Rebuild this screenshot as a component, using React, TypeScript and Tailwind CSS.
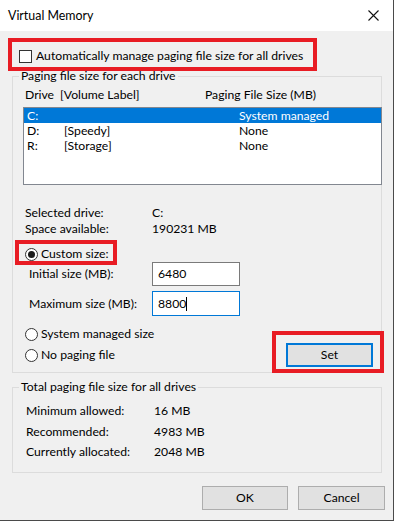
import React from 'react';

const font = { fontFamily: 'Lato, "Noto Sans", Arial, sans-serif' };

const Radio: React.FC<{ checked?: boolean; label: string }> = ({ checked, label }) => (
    <div className="flex items-center h-[16px] gap-[3px]">
        <span className="w-[13px] h-[13px] rounded-full border border-[#333] bg-white flex items-center justify-center">
            {checked && <span className="w-[7px] h-[7px] rounded-full bg-[#1a1a1a]" />}
        </span>
        <span>{label}</span>
    </div>
);

const drives = [
    { d: 'C:', label: '', size: 'System managed', sel: true },
    { d: 'D:', label: '[Speedy]', size: 'None' },
    { d: 'R:', label: '[Storage]', size: 'None' },
];

export default function App() {
    return (
        <div className="w-[396px] h-[523px] bg-white text-[12.2px] leading-[16px] text-black" style={font}>
            <div className="relative w-[394px] h-[521px] border-r border-b border-[#4a4a4a] bg-[#f0f0f0] flex flex-col">
                {/* title bar */}
                <div className="h-[31px] bg-white flex items-center justify-between pl-[8px] pr-[10px] shrink-0">
                    <span className="text-[12.4px]">Virtual Memory</span>
                    <svg width="11" height="11" viewBox="0 0 11 11" className="mr-[4px]">
                        <path d="M0.5 0.5 L10.5 10.5 M10.5 0.5 L0.5 10.5" stroke="#111" strokeWidth="1.1" />
                    </svg>
                </div>

                <div className="pl-[12px] flex flex-col">
                    <div className="flex items-center h-[16px] mt-[17px] ml-[7px] gap-[4px]">
                        <span className="w-[13px] h-[13px] border border-[#333] bg-white" />
                        <span>Automatically manage paging file size for all drives</span>
                    </div>

                    {/* Paging file size for each drive */}
                    <div className="relative mt-[12px] w-[370px] h-[297px] border border-[#dcdcdc] flex flex-col">
                        <span className="absolute left-[6px] -top-[9px] px-[2px] bg-[#f0f0f0]">Paging file size for each drive</span>
                        <div className="flex mt-[10px] ml-[12px]">
                            <span className="w-[35px]">Drive</span>
                            <span className="w-[145px]">[Volume Label]</span>
                            <span>Paging File Size (MB)</span>
                        </div>
                        <div className="mt-[4px] ml-[10px] w-[359px] h-[78px] border border-[#828790] bg-white">
                            {drives.map(r => (
                                <div key={r.d} className={`flex items-center h-[15px] pl-[3px] ${r.sel ? 'bg-[#0078d7] text-white' : ''}`}>
                                    <span className="w-[37px]">{r.d}</span>
                                    <span className="w-[175px]">{r.label}</span>
                                    <span>{r.size}</span>
                                </div>
                            ))}
                        </div>

                        <div className="mt-[20px] ml-[12px]">
                            <div className="flex">
                                <span className="w-[127px]">Selected drive:</span>
                                <span>C:</span>
                            </div>
                            <div className="flex">
                                <span className="w-[127px]">Space available:</span>
                                <span>190231 MB</span>
                            </div>
                        </div>

                        <div className="mt-[9px] ml-[12px]">
                            <Radio checked label="Custom size:" />
                        </div>
                        <div className="flex items-center ml-[16px]">
                            <span className="w-[123px]">Initial size (MB):</span>
                            <div className="w-[88px] h-[24px] border border-[#7a7a7a] bg-white flex items-center pl-[5px]">6480</div>
                        </div>
                        <div className="flex items-center ml-[16px] mt-[5px]">
                            <span className="w-[123px]">Maximum size (MB):</span>
                            <div className="w-[88px] h-[25px] border border-[#0078d7] bg-white flex items-center pl-[5px]">
                                8800<span className="w-px h-[14px] bg-black" />
                            </div>
                        </div>

                        <div className="flex justify-between mt-[10px] ml-[12px] mr-[8px]">
                            <div className="flex flex-col gap-[5px]">
                                <Radio label="System managed size" />
                                <Radio label="No paging file" />
                            </div>
                            <button className="mt-[17px] w-[87px] h-[24px] border-2 border-[#0078d7] bg-[#e1e1e1] flex items-center justify-center">Set</button>
                        </div>
                    </div>

                    {/* Total paging file size */}
                    <div className="relative mt-[14px] w-[370px] h-[86px] border border-[#dcdcdc] flex flex-col">
                        <span className="absolute left-[6px] -top-[9px] px-[2px] bg-[#f0f0f0]">Total paging file size for all drives</span>
                        <div className="mt-[13px] ml-[13px]">
                            {[
                                ['Minimum allowed:', '16 MB'],
                                ['Recommended:', '4983 MB'],
                                ['Currently allocated:', '2048 MB'],
                            ].map(([k, v]) => (
                                <div key={k} className="flex items-center h-[20.5px]">
                                    <span className="w-[128px]">{k}</span>
                                    <span>{v}</span>
                                </div>
                            ))}
                        </div>
                    </div>

                    <div className="flex justify-end gap-[10px] mt-[13px] pr-[8px]">
                        <button className="w-[86px] h-[24px] border border-[#adadad] bg-[#e1e1e1]">OK</button>
                        <button className="w-[87px] h-[24px] border border-[#adadad] bg-[#e1e1e1]">Cancel</button>
                    </div>
                </div>

                {/* red highlight boxes */}
                <div className="absolute left-[8px] top-[38px] w-[309px] h-[33px] border-4 border-[#e81c24]" />
                <div className="absolute left-[15px] top-[240px] w-[102px] h-[25px] border-4 border-[#e81c24]" />
                <div className="absolute left-[272px] top-[331px] w-[112px] h-[42px] border-4 border-[#e81c24]" />
            </div>
        </div>
    );
}
